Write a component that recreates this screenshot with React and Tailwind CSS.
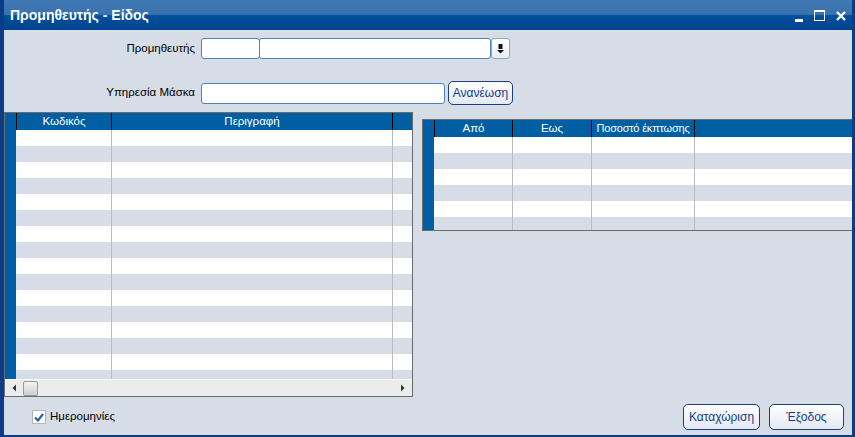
import React from 'react'

const leftRows = Array.from({ length: 16 }, (_, i) => i)
const rightRows = Array.from({ length: 6 }, (_, i) => i)

const Btn = ({ children, className = '' }) => (
    <button className={"rounded-[5px] border border-[#1d3f7c] bg-[linear-gradient(to_bottom,#ffffff,#e3e9f1)] text-[#143b8c] text-[12px] leading-none " + className}>
        {children}
    </button>
)

const App = () => {
    return (
        <div className="w-[855px] h-[437px] overflow-hidden bg-[#d6dde6] border-l-[4px] border-r-[3px] border-b-[2px] border-[#0c3b88] flex flex-col text-[11.5px] text-black" style={{ fontFamily: '"Liberation Sans", Arial, sans-serif' }}>
            {/* title bar */}
            <div className="h-[30px] shrink-0 flex items-center justify-between bg-[linear-gradient(to_bottom,#4079b3_0%,#3a72ae_48%,#00519c_52%,#00438f_100%)]">
                <span className="pl-[6px] text-white font-bold text-[14px]">Προμηθευτής - Είδος</span>
                <div className="flex items-center gap-[11px] pr-[6px] pt-[1px]">
                    <div className="w-[8px] h-[3px] bg-white mt-[9px]" />
                    <div className="w-[11px] h-[11px] border border-white border-t-[2px]" />
                    <svg width="10" height="10" viewBox="0 0 10 10">
                        <path d="M1 1 L9 9 M9 1 L1 9" stroke="white" strokeWidth="2.4" />
                    </svg>
                </div>
            </div>

            {/* form */}
            <div className="flex items-center mt-[8px] h-[21px]">
                <div className="w-[192px] text-right pr-[1px]">Προμηθευτής</div>
                <div className="ml-[5px] flex h-[21px]">
                    <input className="w-[59px] h-full bg-white border border-[#4a85bf] rounded-[3px] outline-none" />
                    <input className="w-[232px] h-full bg-white border border-[#4a85bf] rounded-[3px] -ml-[1px] outline-none" />
                    <div className="w-[19px] h-full bg-[linear-gradient(to_bottom,#ffffff,#e8edf3)] border border-[#9aa6b3] rounded-[3px] flex items-center justify-center">
                        <svg width="7" height="10" viewBox="0 0 7 10">
                            <rect x="1.5" y="0" width="4" height="5" fill="#111" />
                            <path d="M0 6 H7 L3.5 9.5 Z" fill="#111" />
                        </svg>
                    </div>
                </div>
            </div>

            <div className="flex items-center mt-[22px] h-[24px]">
                <div className="w-[192px] text-right pr-[1px]">Υπηρεσία Μάσκα</div>
                <input className="ml-[5px] w-[244px] h-[21px] bg-white border border-[#4a85bf] rounded-[3px] outline-none" />
                <Btn className="ml-[3px] w-[65px] h-[24px]">Ανανέωση</Btn>
            </div>

            {/* tables */}
            <div className="flex items-start mt-[7px]">
                <div className="w-[409px] h-[285px] border border-[#6b6b6b] flex flex-col bg-[#d6dde6]">
                    <div className="flex flex-1 min-h-0 overflow-hidden">
                        <div className="w-[11px] bg-[#005ea6] shrink-0" />
                        <div className="flex-1 flex flex-col">
                            <div className="h-[17px] flex bg-[#005fa3] text-white shrink-0">
                                <div className="w-[96px] border-l border-r border-black text-center leading-[17px]">Κωδικός</div>
                                <div className="w-[281px] border-r border-black text-center leading-[17px]">Περιγραφή</div>
                                <div className="flex-1" />
                            </div>
                            {leftRows.map(i => (
                                <div key={i} className={"h-[16px] shrink-0 flex " + (i % 2 === 0 ? 'bg-white' : 'bg-[#d6dde6]')}>
                                    <div className="w-[96px] border-r border-[#bcbcbc]" />
                                    <div className="w-[281px] border-r border-[#bcbcbc]" />
                                    <div className="flex-1" />
                                </div>
                            ))}
                        </div>
                    </div>
                    <div className="h-[17px] shrink-0 bg-[#ececec] border-t border-[#f8f8f8] flex items-center">
                        <svg width="10" height="10" viewBox="0 0 10 10" className="ml-[5px]">
                            <path d="M6 1.5 L2.5 5 L6 8.5 Z" fill="#333" />
                        </svg>
                        <div className="ml-[3px] w-[15px] h-[15px] rounded-[2px] border border-[#9b9b9b] bg-[linear-gradient(to_bottom,#f4f4f4,#cfcfcf)]" />
                        <div className="flex-1" />
                        <svg width="10" height="10" viewBox="0 0 10 10" className="mr-[4px]">
                            <path d="M3 1.5 L6.5 5 L3 8.5 Z" fill="#333" />
                        </svg>
                    </div>
                </div>

                <div className="ml-[9px] mt-[7px] flex-1 h-[112px] border border-r-0 border-[#6b6b6b] flex overflow-hidden">
                    <div className="w-[11px] bg-[#005ea6] shrink-0" />
                    <div className="flex-1 flex flex-col">
                        <div className="h-[17px] flex bg-[#005fa3] text-white shrink-0">
                            <div className="w-[79px] border-l border-r border-black text-center leading-[17px]">Από</div>
                            <div className="w-[79px] border-r border-black text-center leading-[17px]">Εως</div>
                            <div className="w-[103px] border-r border-black text-center leading-[17px] whitespace-nowrap text-[11px] tracking-[-0.2px]">Ποσοστό έκπτωσης</div>
                            <div className="flex-1" />
                        </div>
                        {rightRows.map(i => (
                            <div key={i} className={"h-[16px] shrink-0 flex " + (i % 2 === 0 ? 'bg-white' : 'bg-[#d6dde6]')}>
                                <div className="w-[79px] border-r border-[#bcbcbc]" />
                                <div className="w-[79px] border-r border-[#bcbcbc]" />
                                <div className="w-[103px] border-r border-[#bcbcbc]" />
                                <div className="flex-1" />
                            </div>
                        ))}
                    </div>
                </div>
            </div>

            {/* bottom */}
            <div className="flex items-center mt-[7px]">
                <div className="ml-[28px] flex items-center">
                    <div className="w-[14px] h-[14px] bg-white border border-[#b5b5b5] flex items-center justify-center">
                        <svg width="10" height="9" viewBox="0 0 10 9">
                            <path d="M1 4.5 L4 7.5 L9 1" stroke="#2f5f9e" strokeWidth="2.2" fill="none" />
                        </svg>
                    </div>
                    <span className="ml-[4px]">Ημερομηνίες</span>
                </div>
                <div className="flex-1" />
                <Btn className="w-[77px] h-[26px]">Καταχώριση</Btn>
                <Btn className="ml-[9px] mr-[8px] w-[75px] h-[26px]">Έξοδος</Btn>
            </div>
        </div>
    )
}

export default App
